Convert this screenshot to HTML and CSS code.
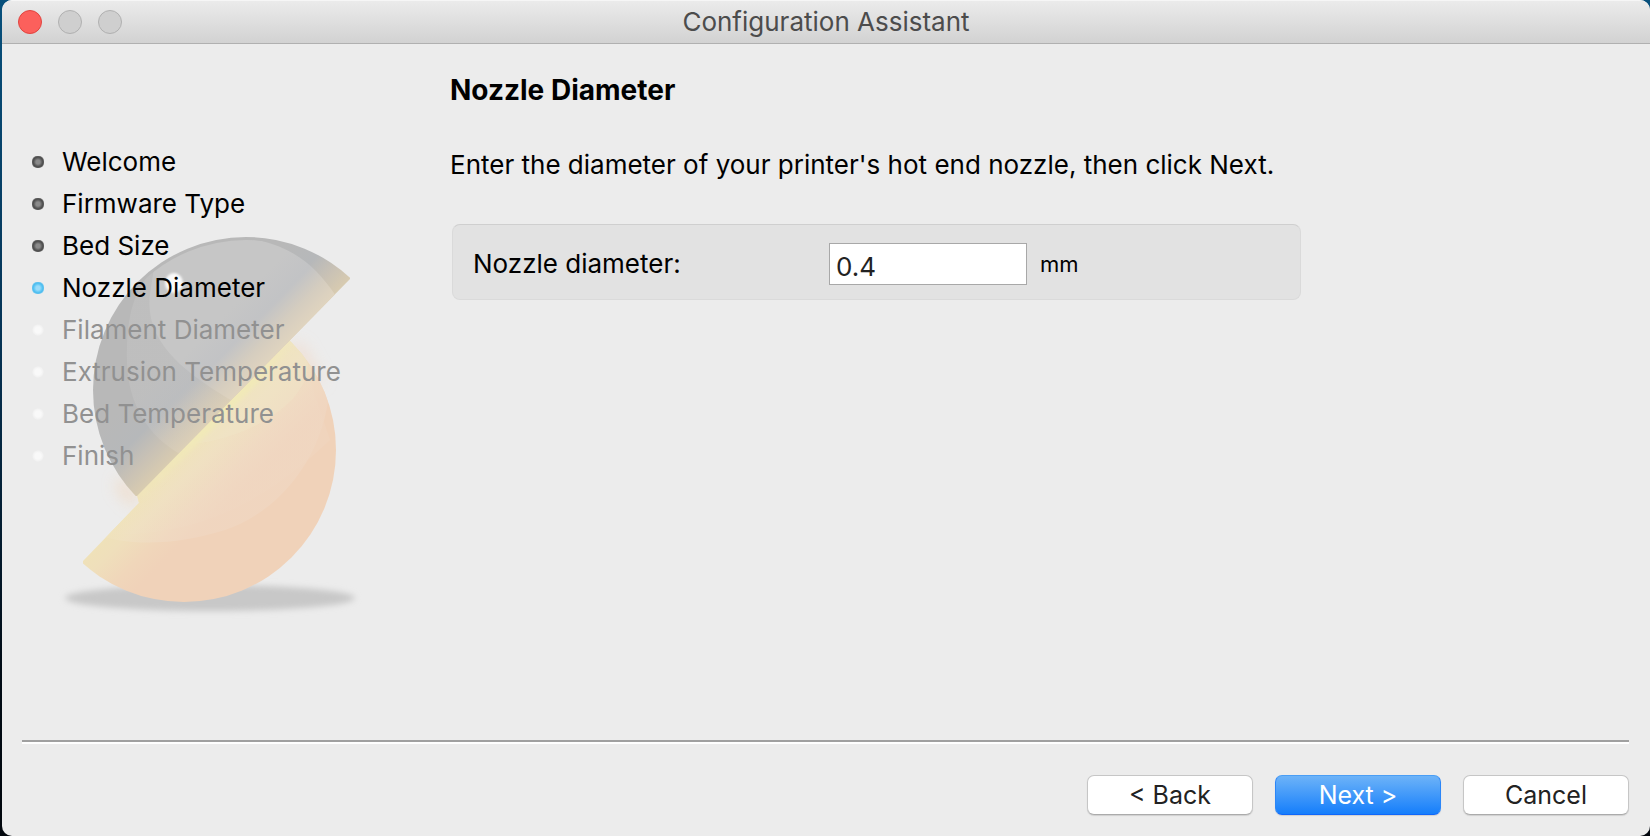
FILE: index.html
```html
<!DOCTYPE html>
<html lang="en">
<head>
<meta charset="utf-8">
<title>Configuration Assistant</title>
<link rel="stylesheet" href="styles.css">
</head>
<body>
<div class="window">
  <header class="titlebar">
    <div class="lights">
      <button class="light light-close" type="button" aria-label="Close"></button>
      <button class="light" type="button" aria-label="Minimize" disabled></button>
      <button class="light" type="button" aria-label="Zoom" disabled></button>
    </div>
    <h1 class="window-title">Configuration Assistant</h1>
  </header>

  <div class="content">
    <nav class="sidebar" aria-label="Steps">
      <svg class="watermark" viewBox="0 0 380 400" aria-hidden="true">
        <defs>
          <linearGradient id="dark" gradientUnits="userSpaceOnUse" x1="120" y1="66" x2="223" y2="168">
            <stop offset="0" stop-color="#b8b8b8"/>
            <stop offset=".5" stop-color="#b8b8b8"/>
            <stop offset=".72" stop-color="#b6b8ba"/>
            <stop offset=".86" stop-color="#c8c1b5"/>
            <stop offset="1" stop-color="#d8cbb0"/>
          </linearGradient>
          <linearGradient id="gloss" gradientUnits="userSpaceOnUse" x1="120" y1="66" x2="223" y2="168">
            <stop offset="0" stop-color="#c6c6c6"/>
            <stop offset=".55" stop-color="#c6c6c6"/>
            <stop offset=".74" stop-color="#c2c3c5"/>
            <stop offset=".88" stop-color="#d5cdbf"/>
            <stop offset="1" stop-color="#e0d4bf"/>
          </linearGradient>
          <linearGradient id="warm" gradientUnits="userSpaceOnUse" x1="168" y1="226" x2="213" y2="270">
            <stop offset="0" stop-color="#efe2b8"/>
            <stop offset=".3" stop-color="#efdfbb"/>
            <stop offset=".7" stop-color="#f0d6ba"/>
            <stop offset="1" stop-color="#f0d2b9"/>
          </linearGradient>
          <linearGradient id="warmGloss" gradientUnits="userSpaceOnUse" x1="168" y1="226" x2="218" y2="275">
            <stop offset="0" stop-color="#f0e4bb"/>
            <stop offset=".3" stop-color="#f0e1c3"/>
            <stop offset=".7" stop-color="#f0dac4"/>
            <stop offset="1" stop-color="#f0d7c2"/>
          </linearGradient>
          <linearGradient id="seam" gradientUnits="userSpaceOnUse" x1="117" y1="278" x2="273" y2="120">
            <stop offset="0" stop-color="#f1e9b8" stop-opacity="0"/>
            <stop offset=".4" stop-color="#f1e9b8"/>
            <stop offset=".75" stop-color="#f1e9b8"/>
            <stop offset="1" stop-color="#f1e9b8" stop-opacity="0"/>
          </linearGradient>
          <clipPath id="upper"><path d="M330 59L117 276L0 276L0 0L330 0Z"/></clipPath>
          <clipPath id="lower"><path d="M63 341L119 283L117 275L272 117L380 117L380 400L63 400Z"/></clipPath>
          <clipPath id="upperDisc"><circle cx="226" cy="170" r="150"/></clipPath>
          <clipPath id="lowerDisc"><circle cx="164" cy="230" r="152"/></clipPath>
          <filter id="soft3" x="-20%" y="-60%" width="140%" height="220%"><feGaussianBlur stdDeviation="3"/></filter>
          <filter id="soft8" x="-80%" y="-80%" width="260%" height="260%"><feGaussianBlur stdDeviation="8"/></filter>
          <filter id="soft1"><feGaussianBlur stdDeviation="1"/></filter>
          <filter id="soft2" x="-20%" y="-20%" width="140%" height="140%"><feGaussianBlur stdDeviation="2"/></filter>
        </defs>
        <ellipse cx="190" cy="378" rx="145" ry="13" fill="#c8c8c8" filter="url(#soft3)"/>
        <path d="M266 125L282 124L304 164L286 160Z" fill="#f2d8c6" opacity=".7" filter="url(#soft8)"/>
        <path d="M100 256L118 276L114 288L96 268Z" fill="#f2d3b6" opacity=".7" filter="url(#soft8)"/>
        <g clip-path="url(#lower)">
          <circle cx="164" cy="230" r="152" fill="url(#warm)"/>
          <g clip-path="url(#lowerDisc)">
            <path d="M72 313C110 328 160 324 205 310C264 290 308 230 310 160L270 90Z" fill="url(#warmGloss)" opacity=".7"/>
            <path d="M88 315C160 314 226 300 310 220L273 110Z" fill="url(#warmGloss)" opacity=".4"/>
            <path d="M166 224C210 224 288 190 288 144L274 115Z" fill="#f0e6c8" opacity=".4"/>
          </g>
          <path d="M117 278L273 120" stroke="url(#seam)" stroke-width="10" filter="url(#soft2)"/>
        </g>
        <g clip-path="url(#upper)">
          <circle cx="226" cy="170" r="153" fill="url(#dark)"/>
          <g clip-path="url(#upperDisc)">
            <path d="M134 48C112 72 106 100 107 142C108 184 128 216 160 234L320 80Z" fill="url(#gloss)" opacity=".45"/>
            <path d="M134 48C168 14 200 14 226 18C266 24 292 40 316 76L214 182C164 152 124 122 130 74Z" fill="url(#gloss)"/>
          </g>
          <ellipse cx="154" cy="63" rx="9" ry="10" fill="#fafafa" filter="url(#soft1)"/>
        </g>
      </svg>
      <ol class="steps">
        <li class="step step-done">Welcome</li>
        <li class="step step-done">Firmware Type</li>
        <li class="step step-done">Bed Size</li>
        <li class="step step-current" aria-current="step">Nozzle Diameter</li>
        <li class="step step-next">Filament Diameter</li>
        <li class="step step-next">Extrusion Temperature</li>
        <li class="step step-next">Bed Temperature</li>
        <li class="step step-next">Finish</li>
      </ol>
    </nav>

    <main class="page">
      <h2 class="page-title">Nozzle Diameter</h2>
      <p class="page-text">Enter the diameter of your printer's hot end nozzle, then click Next.</p>
      <div class="group">
        <label class="group-label" for="nozzle">Nozzle diameter:</label>
        <input class="group-input" id="nozzle" type="text" value="0.4">
        <span class="group-unit">mm</span>
      </div>
    </main>
  </div>

  <footer class="footer">
    <button class="button" type="button">&lt; Back</button>
    <button class="button button-primary" type="button">Next &gt;</button>
    <button class="button" type="button">Cancel</button>
  </footer>
</div>
</body>
</html>
```
FILE: styles.css
```css
* {
  box-sizing: border-box;
}

body {
  margin: 0;
  padding-left: 2px;
  background: linear-gradient(#07507c, #063456 40%, #020c16 80%, #02070d);
  font-family: Inter, "Liberation Sans", sans-serif;
  font-size: 26px;
  line-height: 30px;
  color: #000;
}

.window {
  display: flex;
  flex-direction: column;
  min-height: 100vh;
  border-radius: 10px;
  overflow: hidden;
  background: #ececec;
}

.titlebar {
  display: grid;
  grid-template-columns: 1fr auto 1fr;
  align-items: center;
  height: 44px;
  padding: 0 16px;
  border-top: 1px solid #f6f6f6;
  border-bottom: 1px solid #b0b0b0;
  background: linear-gradient(#ebebeb, #d2d2d2);
}

.lights {
  display: flex;
  gap: 16px;
}

.light {
  width: 24px;
  height: 24px;
  padding: 0;
  border: 1px solid #b0b0b0;
  border-radius: 50%;
  background: #cfcfcf;
}

.light-close {
  border-color: #e0443f;
  background: #fc605c;
}

.window-title {
  margin: 0;
  font-size: 26px;
  font-weight: 400;
  color: #4c4c4c;
}

.content {
  display: flex;
  flex: 1;
}

.sidebar {
  position: relative;
  flex: 0 0 448px;
  padding: 97px 0 0 30px;
}

.watermark {
  position: absolute;
  left: 18px;
  top: 176px;
  width: 380px;
  height: 400px;
}

.steps {
  position: relative;
  margin: 0;
  padding: 0;
  list-style: none;
}

.step {
  display: flex;
  align-items: center;
  gap: 18px;
  height: 42px;
}

.step::before {
  content: "";
  width: 12px;
  height: 12px;
  border-radius: 5px;
}

.step-done::before {
  background: radial-gradient(circle, #8a8a8a 0 2px, #5c5c5c 4px, #4c4c4c 5px, #858585 7px);
}

.step-current::before {
  background: radial-gradient(circle, #9bdcfa 0 2px, #5ec8f5 4px, #4fbcee 5px, #8fd3f2 7px);
}

.step-next {
  color: #919191;
}

.step-next::before {
  background: radial-gradient(circle, #f9f9f9 0 3px, #f2f2f2 5px, #ececec 6px);
}

.page {
  flex: 1;
  padding: 31px 20px 0 0;
}

.page-title {
  margin: 0;
  font-size: 28px;
  font-weight: 700;
}

.page-text {
  margin: 45px 0 0;
}

.group {
  display: flex;
  align-items: center;
  max-width: 849px;
  height: 76px;
  margin: 44px 0 0 2px;
  padding: 4px 20px 0;
  border: 1px solid #dadada;
  border-top-color: #cfcfcf;
  border-radius: 8px;
  background: #e2e2e2;
}

.group-label {
  width: 356px;
}

.group-input {
  width: 198px;
  height: 42px;
  padding: 4px 6px 0;
  border: 1px solid #a8a8a8;
  border-radius: 0;
  background: #fff;
  font: inherit;
  color: #222;
}

.group-unit {
  margin-left: 13px;
  font-size: 22px;
}

.footer {
  display: flex;
  justify-content: flex-end;
  gap: 22px;
  margin: 0 21px 0 20px;
  padding: 33px 0 21px;
  border-top: 2px solid #a0a0a0;
  box-shadow: inset 0 2px #fff;
}

.button {
  width: 166px;
  height: 40px;
  padding: 0;
  border: 1px solid #c6c6c6;
  border-bottom-color: #ababab;
  border-radius: 7px;
  background: #fff;
  box-shadow: 0 1px 1px #d0d0d0;
  font: inherit;
  font-size: 25px;
  color: #222;
}

.button-primary {
  border-color: #4a9ef5 #2b86f8 #0f66fa;
  background: linear-gradient(#6db3f8, #157efb);
  color: #fff;
}
```
